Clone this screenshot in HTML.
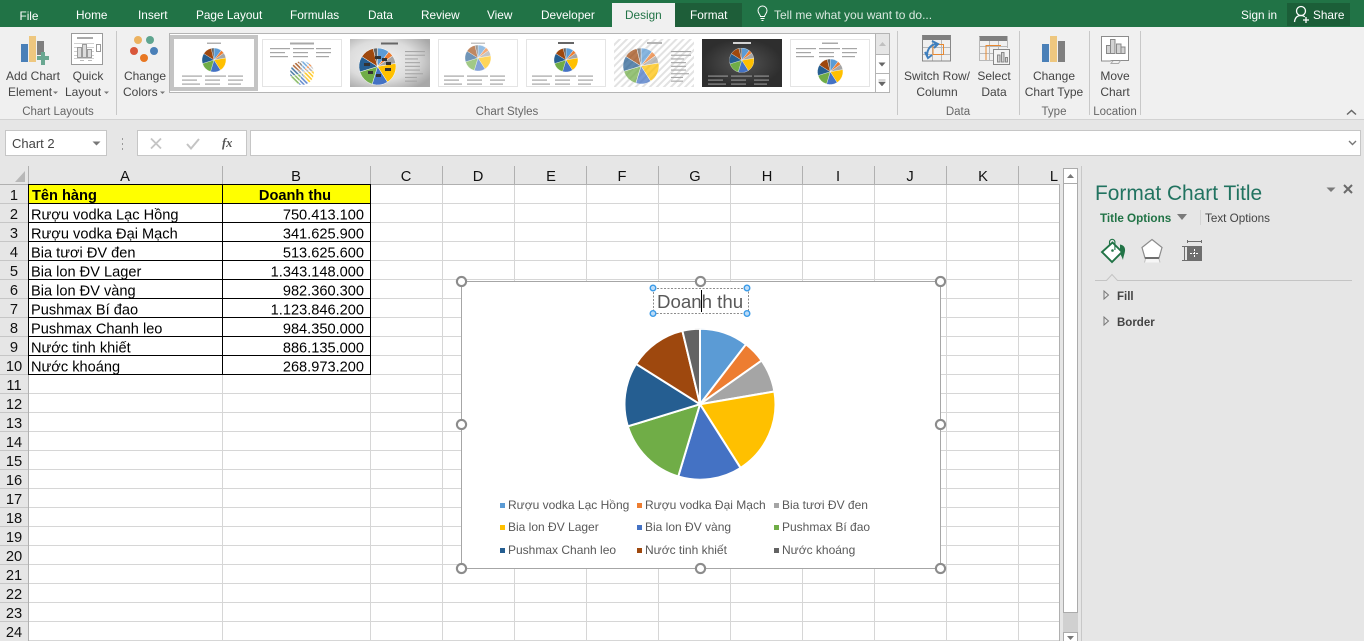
<!DOCTYPE html>
<html><head><meta charset="utf-8"><style>
html,body{margin:0;padding:0;background:#fff;width:1364px;height:641px;overflow:hidden}
svg{display:block;position:absolute;left:0;top:0}
text{font-family:"Liberation Sans","Noto Sans CJK SC",sans-serif;white-space:pre}
.tab{font-size:11.8px;fill:#fff}
.r{font-size:12px;fill:#444}
.g{font-size:11.5px;fill:#666;text-anchor:middle}
.m{text-anchor:middle}
.cell{font-size:14.6px;fill:#000}
.num{font-size:14.6px;fill:#000;text-anchor:end}
.hd{font-size:14.67px;fill:#111;text-anchor:middle}
.lg{font-size:12px;fill:#595959}
.crisp{shape-rendering:crispEdges}
</style></head><body>
<svg width="1364" height="641" viewBox="0 0 1364 641" xmlns="http://www.w3.org/2000/svg">
<defs>
<symbol id="pie" viewBox="-75 -75 150 150">
<g stroke="#fff" stroke-width="2" stroke-linejoin="round">
<path fill="#5b9bd5" d="M0 0V-75A75 75 0 0 1 45.7-59.5Z"/>
<path fill="#ed7d31" d="M0 0L45.7-59.5A75 75 0 0 1 61.2-43.4Z"/>
<path fill="#a5a5a5" d="M0 0L61.2-43.4A75 75 0 0 1 73.9-12.6Z"/>
<path fill="#ffc000" d="M0 0L73.9-12.6A75 75 0 0 1 40.3 63.3Z"/>
<path fill="#4472c4" d="M0 0L40.3 63.3A75 75 0 0 1-21.6 71.8Z"/>
<path fill="#70ad47" d="M0 0L-21.6 71.8A75 75 0 0 1-71.7 22Z"/>
<path fill="#255e91" d="M0 0L-71.7 22A75 75 0 0 1-63.5-40Z"/>
<path fill="#9e480e" d="M0 0L-63.5-40A75 75 0 0 1-17.5-72.9Z"/>
<path fill="#636363" d="M0 0L-17.5-72.9A75 75 0 0 1 0-75Z"/>
</g>
</symbol>
<symbol id="leg" viewBox="0 0 69 12">
<g fill="#a6a6a6"><rect x="0" y="0" width="20" height="1.2"/><rect x="23" y="0" width="21" height="1.2"/><rect x="46" y="0" width="15" height="1.2"/><rect x="0" y="4" width="15" height="1.2"/><rect x="23" y="4" width="15" height="1.2"/><rect x="46" y="4" width="15" height="1.2"/><rect x="0" y="8" width="18" height="1.2"/><rect x="23" y="8" width="15" height="1.2"/><rect x="46" y="8" width="13" height="1.2"/></g>
</symbol>
<symbol id="leg2" viewBox="0 0 22 32">
<g fill="#a6a6a6"><rect y="0" width="20" height="1.1"/><rect y="3.7" width="20" height="1.1"/><rect y="7.4" width="13" height="1.1"/><rect y="11.100" width="15" height="1.1"/><rect y="14.800" width="15" height="1.1"/><rect y="18.500" width="15" height="1.1"/><rect y="22.200" width="18" height="1.1"/><rect y="25.900" width="12" height="1.1"/><rect y="29.600" width="12" height="1.1"/></g>
</symbol>
<radialGradient id="rg" cx=".4" cy=".45" r=".7"><stop offset="0" stop-color="#f2f2f2"/><stop offset=".6" stop-color="#dcdcdc"/><stop offset="1" stop-color="#a8a8a8"/></radialGradient>
<radialGradient id="dk"><stop offset="0" stop-color="#555"/><stop offset="1" stop-color="#2e2e2e"/></radialGradient>
<pattern id="hatch" width="5" height="5" patternUnits="userSpaceOnUse" patternTransform="rotate(45)"><rect width="5" height="5" fill="#fff"/><rect width="2" height="5" fill="#e2e2e2"/></pattern>
<pattern id="wh" width="3" height="3" patternUnits="userSpaceOnUse" patternTransform="rotate(-45)"><rect width="1.4" height="3" fill="#fff"/></pattern>
</defs>

<!-- backgrounds -->
<rect class="crisp" width="1364" height="27" fill="#217346"/>
<rect class="crisp" y="27" width="1364" height="93" fill="#f0f0f0"/>
<rect class="crisp" y="119" width="1364" height="1" fill="#d2d2d2"/>
<rect class="crisp" y="120" width="1364" height="521" fill="#e6e6e6"/>

<!-- tabs -->
<rect class="crisp" x="612" y="3" width="63" height="24" fill="#f0f0f0"/>
<rect class="crisp" x="675" y="3" width="67" height="24" fill="#1e5e39"/>
<rect class="crisp" x="1287" y="3" width="63" height="23" fill="#1b5e38"/>
<text class="tab m" x="29" y="20">File</text>
<text class="tab" x="76" y="19">Home</text>
<text class="tab" x="138" y="19">Insert</text>
<text class="tab" x="196" y="19">Page Layout</text>
<text class="tab" x="290" y="19">Formulas</text>
<text class="tab" x="368" y="19">Data</text>
<text class="tab" x="421" y="19">Review</text>
<text class="tab" x="487" y="19">View</text>
<text class="tab" x="541" y="19">Developer</text>
<text class="tab" x="625" y="19" style="fill:#217346">Design</text>
<text class="tab" x="690" y="19">Format</text>
<text class="tab" x="774" y="19" style="fill:#d9e8df;font-size:12px">Tell me what you want to do...</text>
<text class="tab" x="1241" y="19">Sign in</text>
<text class="tab" x="1313" y="19">Share</text>
<!-- bulb -->
<g fill="none" stroke="#fff" stroke-width="1"><path d="M760.5 16.5c0-1.800-2.500-2.800-2.500-6a4.500 4.500 0 0 1 9 0c0 3.200-2.500 4.200-2.500 6z"/><path d="M760.500 18.500h4M761.500 20.500h2"/></g>
<!-- share icon -->
<g fill="none" stroke="#fff" stroke-width="1.300"><circle cx="1301" cy="11" r="4.500"/><path d="M1294.500 22c.5-4.500 3-6.500 6.500-6.500 1.500 0 2.800.4 3.800 1.200"/><path d="M1303 20h6M1306 17v6"/></g>

<!-- ribbon separators -->
<g class="crisp" fill="#c8c8c8"><rect x="116" y="31" width="1" height="84"/><rect x="897" y="31" width="1" height="84"/><rect x="1019" y="31" width="1" height="84"/><rect x="1089" y="31" width="1" height="84"/><rect x="1140" y="31" width="1" height="84"/></g>

<!-- add chart icon -->
<g class="crisp"><rect x="21" y="44" width="7" height="18" fill="#4a80b8"/><rect x="29" y="36" width="7" height="26" fill="#eec77f"/><rect x="37" y="41" width="7" height="14" fill="#7f7f7f"/><path d="M41 52h4v4h4v4h-4v5h-4v-5h-4v-4h4z" fill="#6aa791"/></g>
<!-- quick layout icon -->
<g fill="none" stroke="#9a9a9a" class="crisp"><rect x="71.500" y="33.500" width="31" height="31" fill="#fff"/><path d="M77 38h16" stroke="#aaa" stroke-width="2"/><path d="M74 43.500h20M74 47.500h20M74 51.500h20M74 55.500h20M74 58.500h20" stroke="#cfcfcf"/><rect x="77.500" y="47.500" width="4" height="10" fill="#dcdcdc"/><rect x="82.500" y="44.500" width="4" height="13" fill="#dcdcdc"/><rect x="87.500" y="49.500" width="4" height="8" fill="#dcdcdc"/><rect x="96.500" y="44.500" width="4" height="7"/><path d="M80 60.500h4M88 60.500h4" stroke="#bbb"/></g>
<!-- change colors -->
<circle cx="138" cy="40" r="4" fill="#ecb260"/><circle cx="150" cy="40" r="4" fill="#5fa58f"/><circle cx="134" cy="51" r="4" fill="#d9573a"/><circle cx="154" cy="51" r="4" fill="#4a80b8"/><circle cx="144" cy="58" r="4" fill="#e87722"/>

<!-- ribbon labels -->
<text class="r m" x="33" y="80">Add Chart</text>
<text class="r" x="8" y="96">Element</text><path d="M53 91.500h5l-2.500 2.500z" fill="#777"/>
<text class="r m" x="88" y="80">Quick</text>
<text class="r" x="65" y="96">Layout</text><path d="M104 91.500h5l-2.500 2.500z" fill="#777"/>
<text class="r m" x="145" y="80">Change</text>
<text class="r" x="123" y="96">Colors</text><path d="M160 91.500h5l-2.500 2.500z" fill="#777"/>
<text class="g" x="58" y="115">Chart Layouts</text>
<text class="g" x="507" y="115">Chart Styles</text>
<text class="g" x="958" y="115">Data</text>
<text class="g" x="1054" y="115">Type</text>
<text class="g" x="1115" y="115">Location</text>
<text class="r m" x="937" y="80">Switch Row/</text>
<text class="r m" x="937" y="96">Column</text>
<text class="r m" x="994" y="80">Select</text>
<text class="r m" x="994" y="96">Data</text>
<text class="r m" x="1054" y="80">Change</text>
<text class="r m" x="1054" y="96">Chart Type</text>
<text class="r m" x="1115" y="80">Move</text>
<text class="r m" x="1115" y="96">Chart</text>
<path d="M1347 114.500l4.500-4 4.500 4" fill="none" stroke="#666" stroke-width="1.500"/>

<!-- switch row icon -->
<g fill="none"><rect class="crisp" x="922" y="35" width="29" height="5" fill="#7f7f7f"/><path class="crisp" d="M922.500 35.500v25.500h28V35.500M922.500 47.500h28M922.500 54.500h28M932.500 40v21M941.500 40v21M950.500 40v21" stroke="#b8b8b8"/><path class="crisp" d="M922.500 35.500v25.500h28V35.500" stroke="#888"/><path class="crisp" d="M933 44.500h10.500v10H933z" stroke="#e8872e" stroke-width="1.300"/><path d="M927 56c0-7 4-12 10-12M932 41l6 3-4 4M925 52l3 6 4-3" stroke="#3f7fbd" stroke-width="2"/></g>
<!-- select data icon -->
<g fill="none"><rect class="crisp" x="979" y="36" width="29" height="5" fill="#7f7f7f"/><path class="crisp" d="M979.500 36.500v24h20M979.500 46.500h28M979.500 53.500h20M989.500 41v19M998.500 41v8M1007.500 36v12" stroke="#b8b8b8"/><path class="crisp" d="M986 60V45.500h15" stroke="#e8872e"/><rect class="crisp" x="993.500" y="49.500" width="16" height="15" fill="#f4f4f4" stroke="#888"/><path class="crisp" d="M997.500 62v-7h2.500v7zM1001.500 62V52.500h2.500V62zM1005.500 62v-4.500h2V62z" fill="#d4d4d4" stroke="#888" stroke-width=".8"/></g>
<!-- change chart type -->
<g class="crisp"><rect x="1042" y="44" width="7" height="18" fill="#4a80b8"/><rect x="1050" y="36" width="7" height="26" fill="#eec77f"/><rect x="1058" y="41" width="7" height="21" fill="#7f7f7f"/></g>
<!-- move chart -->
<g fill="#f8f8f8" stroke="#888"><path d="M1101.500 36.500h27v24h-14l-2.500 0-2 0.500h-8.500z" fill="#fff" stroke="#8c8c8c"/><rect x="1106.500" y="45.500" width="4" height="8" fill="#d2d2d2"/><rect x="1110.500" y="39.500" width="4.500" height="14" fill="#d2d2d2"/><rect x="1116.500" y="44" width="4.500" height="9.500" fill="#d2d2d2"/><rect x="1121" y="47" width="4" height="6.500" fill="#d2d2d2"/><path d="M1113 61l-2 2.500h7.500l2-3" fill="none" stroke="#aaa"/></g>

<!-- gallery -->
<rect class="crisp" x="169.500" y="33.500" width="720" height="59" fill="#fff" stroke="#b4b4b4"/>
<rect class="crisp" x="170" y="35" width="88" height="56" fill="#c4c4c4"/>
<g class="crisp" fill="#fff" stroke="#e4e4e4"><rect x="174.500" y="39.500" width="79" height="47" stroke="#fff"/><rect x="262.500" y="39.500" width="79" height="47"/><rect x="438.500" y="39.500" width="79" height="47"/><rect x="526.500" y="39.500" width="79" height="47"/><rect x="790.500" y="39.500" width="79" height="47"/></g>
<rect class="crisp" x="350" y="39" width="80" height="48" fill="url(#rg)"/>
<rect class="crisp" x="614" y="39" width="80" height="48" fill="url(#hatch)"/>
<rect class="crisp" x="702" y="39" width="80" height="48" fill="url(#dk)"/>

<!-- thumb 1 -->
<rect x="207" y="42.500" width="14" height="1.500" fill="#b0b0b0"/>
<use href="#pie" x="202" y="48" width="24" height="24"/>
<use href="#leg" x="182" y="75.500" width="69" height="12"/>
<!-- thumb 2 -->
<rect x="290" y="42.500" width="24" height="2" fill="#a8a8a8"/>
<use href="#leg" x="270" y="48" width="69" height="12"/>
<g opacity=".8"><use href="#pie" x="290" y="61" width="24" height="24"/></g>
<circle cx="302" cy="73" r="12.500" fill="url(#wh)"/>
<!-- thumb 3 -->
<rect x="381" y="42.500" width="17" height="2" fill="#666"/>
<use href="#pie" x="359" y="48" width="37" height="37"/>
<g fill="#333" class="crisp"><rect x="364" y="63" width="6" height="3"/><rect x="375" y="56" width="6" height="3"/><rect x="382" y="58" width="5" height="3"/><rect x="386" y="62" width="5" height="3"/><rect x="385" y="68" width="6" height="3"/><rect x="368" y="71" width="5" height="3"/><rect x="376" y="74" width="5" height="3"/></g>
<use href="#leg2" x="405" y="51" width="22" height="32"/>
<!-- thumb 4 -->
<rect x="471" y="42.500" width="14" height="1.500" fill="#c4c4c4"/>
<g opacity=".65"><use href="#pie" x="465" y="45" width="26" height="26"/></g>
<use href="#leg" x="444" y="75.500" width="69" height="12"/>
<!-- thumb 5 -->
<rect x="558" y="42" width="16" height="2" fill="#666"/>
<use href="#pie" x="554" y="48" width="24" height="24"/>
<use href="#leg" x="532" y="75.500" width="69" height="12"/>
<!-- thumb 6 -->
<rect x="647" y="42" width="15" height="2" fill="#b4b4b4"/>
<g opacity=".72"><use href="#pie" x="623" y="48" width="36" height="36"/></g>
<use href="#leg2" x="671" y="51" width="22" height="32"/>
<!-- thumb 7 -->
<rect x="733" y="42" width="18" height="2" fill="#d4d4d4"/>
<use href="#pie" x="729.500" y="48" width="24.500" height="24.500"/>
<g opacity=".8"><use href="#leg" x="708" y="75.500" width="69" height="12"/></g>
<!-- thumb 8 -->
<rect x="822" y="42.500" width="16" height="1.500" fill="#a8a8a8"/>
<use href="#leg" x="796" y="48" width="69" height="12"/>
<use href="#pie" x="817.500" y="59" width="25.500" height="25.500"/>

<!-- gallery scroll -->
<rect class="crisp" x="876" y="34" width="13" height="20" fill="#e6e6e6"/>
<path class="crisp" d="M875.500 33.500v59M875.500 54.500h14M875.500 73.500h14" stroke="#b4b4b4" fill="none"/>
<path d="M879 46l3.500-4 3.500 4z" fill="#c0c0c0"/>
<path d="M878.500 62.500h7l-3.500 4z" fill="#666"/>
<path d="M878.500 80h7M878.500 82h7l-3.500 4z" fill="#666" stroke="#666" stroke-width=".5"/>

<!-- formula bar -->
<rect class="crisp" x="5.500" y="130.500" width="101" height="25" fill="#fff" stroke="#c6c6c6"/>
<text x="12" y="148" style="font-size:13px;fill:#444">Chart 2</text>
<path d="M92.500 141.500h8l-4 4z" fill="#777"/>
<path class="crisp" d="M122 138h1v2h-1zM122 143h1v2h-1zM122 148h1v2h-1z" fill="#999"/>
<rect class="crisp" x="137.500" y="130.500" width="109" height="25" fill="#fff" stroke="#c6c6c6"/>
<path d="M151 138.500l10 10M161 138.500l-10 10" stroke="#c4c4c4" stroke-width="1.800" fill="none"/>
<path d="M187 144l4 4.500 8-9.500" stroke="#c4c4c4" stroke-width="2" fill="none"/>
<text x="222" y="147" style="font-size:12.500px;font-style:italic;font-weight:bold;fill:#555;font-family:'Liberation Serif',serif">fx</text>
<rect class="crisp" x="250.500" y="130.500" width="1110" height="25" fill="#fff" stroke="#c6c6c6"/>
<path d="M1349 141l3.500 3.500 3.500-3.500" stroke="#777" stroke-width="1.400" fill="none"/>

<!-- sheet -->
<rect class="crisp" x="29" y="185" width="1031" height="456" fill="#fff"/>
<path class="crisp" stroke="#d6d6d6" fill="none" d="M29 222.500H1059M29 241.500H1059M29 260.500H1059M29 279.500H1059M29 298.500H1059M29 317.500H1059M29 336.500H1059M29 355.500H1059M29 374.500H1059M29 393.500H1059M29 412.500H1059M29 431.500H1059M29 450.500H1059M29 469.500H1059M29 488.500H1059M29 507.500H1059M29 526.500H1059M29 545.500H1059M29 564.500H1059M29 583.500H1059M29 602.500H1059M29 621.500H1059M29 640.500H1059M29 203.500H1059M222.500 185V641M370.500 185V641M442.500 185V641M514.500 185V641M586.500 185V641M658.500 185V641M730.500 185V641M802.500 185V641M874.500 185V641M946.500 185V641M1018.500 185V641"/>
<path class="crisp" stroke="#b0b0b0" fill="none" d="M28.500 166V641M0 184.500H1060M1059.500 184V641M222.500 166V184M370.500 166V184M442.500 166V184M514.500 166V184M586.500 166V184M658.500 166V184M730.500 166V184M802.500 166V184M874.500 166V184M946.500 166V184M1018.500 166V184"/>
<path class="crisp" stroke="#c6c6c6" fill="none" d="M0 203.500H28M0 222.500H28M0 241.500H28M0 260.500H28M0 279.500H28M0 298.500H28M0 317.500H28M0 336.500H28M0 355.500H28M0 374.500H28M0 393.500H28M0 412.500H28M0 431.500H28M0 450.500H28M0 469.500H28M0 488.500H28M0 507.500H28M0 526.500H28M0 545.500H28M0 564.500H28M0 583.500H28M0 602.500H28M0 621.500H28"/>
<path d="M25 171v11H15z" fill="#b8b8b8"/>
<rect class="crisp" x="29" y="185" width="341" height="18" fill="#ffff00"/>
<path class="crisp" stroke="#000" fill="none" d="M29 203.500H371M29 222.500H371M29 241.500H371M29 260.500H371M29 279.500H371M29 298.500H371M29 317.500H371M29 336.500H371M29 355.500H371M29 374.500H371M222.500 185V375M370.500 185V375M29 184.500H371M28.500 184V375"/>

<g class="hd">
<text class="hd" x="125" y="181">A</text><text class="hd" x="296" y="181">B</text><text class="hd" x="406" y="181">C</text><text class="hd" x="478" y="181">D</text><text class="hd" x="551" y="181">E</text><text class="hd" x="622" y="181">F</text><text class="hd" x="695" y="181">G</text><text class="hd" x="767" y="181">H</text><text class="hd" x="838" y="181">I</text><text class="hd" x="910" y="181">J</text><text class="hd" x="983" y="181">K</text><text class="hd" x="1054" y="181">L</text>
<text class="hd" x="14" y="200">1</text><text class="hd" x="14" y="219">2</text><text class="hd" x="14" y="238">3</text><text class="hd" x="14" y="257">4</text><text class="hd" x="14" y="276">5</text><text class="hd" x="14" y="295">6</text><text class="hd" x="14" y="314">7</text><text class="hd" x="14" y="333">8</text><text class="hd" x="14" y="352">9</text><text class="hd" x="14" y="371">10</text><text class="hd" x="14" y="390">11</text><text class="hd" x="14" y="409">12</text><text class="hd" x="14" y="428">13</text><text class="hd" x="14" y="447">14</text><text class="hd" x="14" y="466">15</text><text class="hd" x="14" y="485">16</text><text class="hd" x="14" y="504">17</text><text class="hd" x="14" y="523">18</text><text class="hd" x="14" y="542">19</text><text class="hd" x="14" y="561">20</text><text class="hd" x="14" y="580">21</text><text class="hd" x="14" y="599">22</text><text class="hd" x="14" y="618">23</text><text class="hd" x="14" y="637">24</text>
</g>

<text class="cell" x="32" y="200" style="font-weight:bold">Tên hàng</text>
<text class="cell m" x="295" y="200" style="font-weight:bold">Doanh thu</text>
<text class="cell" x="31" y="219.500">Rượu vodka Lạc Hồng</text><text class="num" x="364" y="219.500">750.413.100</text>
<text class="cell" x="31" y="238.500">Rượu vodka Đại Mạch</text><text class="num" x="364" y="238.500">341.625.900</text>
<text class="cell" x="31" y="257.500">Bia tươi ĐV đen</text><text class="num" x="364" y="257.500">513.625.600</text>
<text class="cell" x="31" y="276.500">Bia lon ĐV Lager</text><text class="num" x="364" y="276.500">1.343.148.000</text>
<text class="cell" x="31" y="295.500">Bia lon ĐV vàng</text><text class="num" x="364" y="295.500">982.360.300</text>
<text class="cell" x="31" y="314.500">Pushmax Bí đao</text><text class="num" x="364" y="314.500">1.123.846.200</text>
<text class="cell" x="31" y="333.500">Pushmax Chanh leo</text><text class="num" x="364" y="333.500">984.350.000</text>
<text class="cell" x="31" y="352.500">Nước tinh khiết</text><text class="num" x="364" y="352.500">886.135.000</text>
<text class="cell" x="31" y="371.500">Nước khoáng</text><text class="num" x="364" y="371.500">268.973.200</text>

<!-- chart -->
<rect class="crisp" x="461.500" y="281.500" width="479" height="287" fill="#fff" stroke="#a6a6a6"/>
<use href="#pie" x="624.500" y="328.700" width="151" height="151"/>
<rect x="653.500" y="288.500" width="95" height="25" fill="none" stroke="#8c8c8c" stroke-dasharray="2 1.500" class="crisp"/>
<text x="657" y="308" style="font-size:18.670px;fill:#595959">Doanh thu</text>
<rect class="crisp" x="701" y="290" width="1" height="22" fill="#000"/>
<g fill="#bcdcf8" stroke="#3a9be8" stroke-width="1.400"><circle cx="653" cy="288" r="2.800"/><circle cx="747" cy="288" r="2.800"/><circle cx="653" cy="313.500" r="2.800"/><circle cx="747" cy="313.500" r="2.800"/></g>
<g fill="#fff" stroke="#8c8c8c" stroke-width="2.100"><circle cx="461.500" cy="281.500" r="4.600"/><circle cx="700.500" cy="281.500" r="4.600"/><circle cx="940.500" cy="281.500" r="4.600"/><circle cx="461.500" cy="424.500" r="4.600"/><circle cx="940.500" cy="424.500" r="4.600"/><circle cx="461.500" cy="568.500" r="4.600"/><circle cx="700.500" cy="568.500" r="4.600"/><circle cx="940.500" cy="568.500" r="4.600"/></g>
<!-- legend -->
<g class="crisp"><rect x="500" y="503" width="5" height="5" fill="#5b9bd5"/><rect x="637" y="503" width="5" height="5" fill="#ed7d31"/><rect x="774" y="503" width="5" height="5" fill="#a5a5a5"/><rect x="500" y="525" width="5" height="5" fill="#ffc000"/><rect x="637" y="525" width="5" height="5" fill="#4472c4"/><rect x="774" y="525" width="5" height="5" fill="#70ad47"/><rect x="500" y="548" width="5" height="5" fill="#255e91"/><rect x="637" y="548" width="5" height="5" fill="#9e480e"/><rect x="774" y="548" width="5" height="5" fill="#636363"/></g>
<text class="lg" x="508" y="509">Rượu vodka Lạc Hồng</text><text class="lg" x="645" y="509">Rượu vodka Đại Mạch</text><text class="lg" x="782" y="509">Bia tươi ĐV đen</text>
<text class="lg" x="508" y="531">Bia lon ĐV Lager</text><text class="lg" x="645" y="531">Bia lon ĐV vàng</text><text class="lg" x="782" y="531">Pushmax Bí đao</text>
<text class="lg" x="508" y="554">Pushmax Chanh leo</text><text class="lg" x="645" y="554">Nước tinh khiết</text><text class="lg" x="782" y="554">Nước khoáng</text>

<!-- sheet scrollbar -->
<rect class="crisp" x="1060" y="166" width="21" height="475" fill="#e6e6e6"/>
<rect class="crisp" x="1063" y="183" width="15" height="449" fill="#d0d0d0"/>
<rect class="crisp" x="1063.500" y="183.500" width="14" height="429" fill="#fff" stroke="#ababab"/>
<rect class="crisp" x="1063.500" y="168.500" width="14" height="15" fill="#fff" stroke="#ababab"/>
<rect class="crisp" x="1063.500" y="632.500" width="14" height="12" fill="#fff" stroke="#ababab"/>
<path d="M1067 178l3.500-4 3.500 4z" fill="#777"/>
<path d="M1067 636h7l-3.500 4z" fill="#777"/>
<rect class="crisp" x="1081" y="166" width="1" height="475" fill="#c8c8c8"/>

<!-- panel -->
<text x="1095" y="200" style="font-size:20.900px;fill:#217360">Format Chart Title</text>
<path d="M1326.500 187.500h9l-4.500 4.500z" fill="#7a7a7a"/>
<path d="M1344 185l8 8M1352 185l-8 8" stroke="#6a6a6a" stroke-width="2" fill="none"/>
<text x="1100" y="222" style="font-size:11.700px;font-weight:bold;fill:#217346">Title Options</text>
<path d="M1177 214h10l-5 6z" fill="#7a7a7a"/>
<rect class="crisp" x="1200" y="210" width="1" height="15" fill="#d4d4d4"/>
<text x="1205" y="222" style="font-size:11.700px;fill:#444">Text Options</text>

<!-- fill icon -->
<path d="M1120 244.500c3.500.5 5.500 3 5 6.500-.3 3-1.700 5.500-2 9-1-3-2.500-5-3-8z" fill="#217346"/>
<path d="M1112.500 242.500l9.500 9.500-10 10-10-10z" fill="#fff" stroke="#217346" stroke-width="1.900" stroke-linejoin="miter"/>
<path d="M1109.500 245v-3a2.700 2.700 0 0 1 5.400 0v8" fill="none" stroke="#217346" stroke-width="1.100"/>
<circle cx="1112.500" cy="250.500" r="1.300" fill="#217346"/>
<!-- effects pentagon icon -->
<path d="M1152 239.500l10 8-3 10.500h-14l-3-10.500z" fill="#fff" stroke="#8c8c8c" stroke-width="1.200"/>
<path d="M1145 258h14" stroke="#6e6e6e" stroke-width="2"/>
<path d="M1145.500 259l-1 3.500h15.500l-1-3.500z" fill="#f6f6f6"/><path d="M1144.500 262.500l1-3.500M1160 262.500l-1-3.500" stroke="#c0c0c0"/>
<!-- size icon -->
<g class="crisp"><rect x="1187" y="246" width="15" height="15" fill="#6e6e6e"/><path d="M1187.500 241.500h14M1187.500 240v3M1201.500 240v3M1182 246.500h5M1182 260.500h5M1184.500 246.500v14" stroke="#6e6e6e" fill="none"/><path d="M1194.500 249v9M1190 253.500h9" stroke="#fff" fill="none" stroke-dasharray="2 1"/></g>
<path d="M1095 280.500h11.500l5.500-6 5.500 6H1352" fill="none" stroke="#c4c4c4"/>

<path d="M1104 291l4.500 4-4.500 4z" fill="none" stroke="#777"/>
<path d="M1104 317l4.500 4-4.500 4z" fill="none" stroke="#777"/>
<text x="1117" y="300" style="font-size:11.500px;font-weight:bold;fill:#444">Fill</text>
<text x="1117" y="326" style="font-size:11.500px;font-weight:bold;fill:#444">Border</text>
</svg>
</body></html>
